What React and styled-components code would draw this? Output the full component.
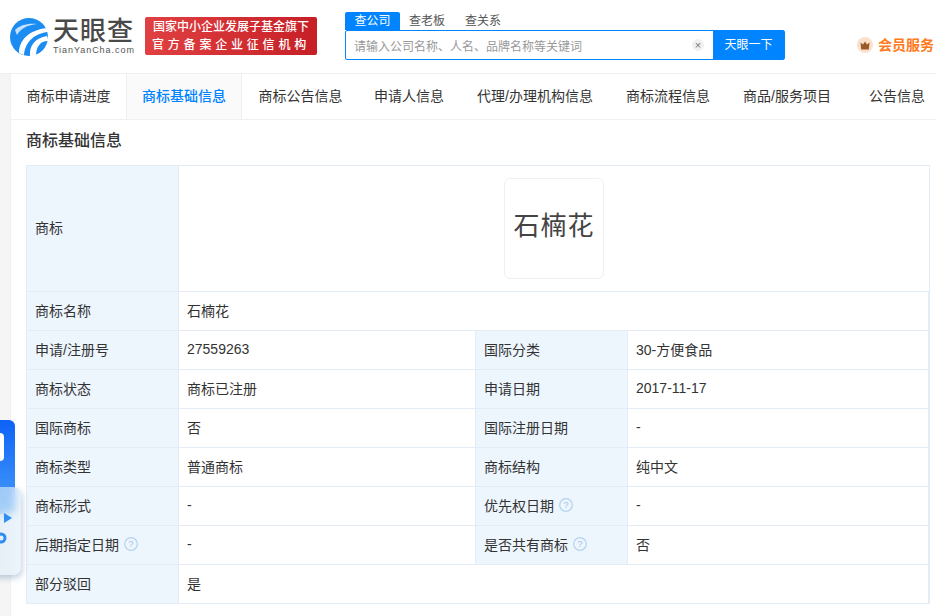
import styled, { createGlobalStyle } from 'styled-components';

const tabs = [
  { label: '商标申请进度', width: 115 },
  { label: '商标基础信息', width: 116, active: true },
  { label: '商标公告信息', width: 117 },
  { label: '申请人信息', width: 100 },
  { label: '代理/办理机构信息', width: 152 },
  { label: '商标流程信息', width: 114 },
  { label: '商品/服务项目', width: 124 },
  { label: '公告信息', width: 96 },
];

const Hint = () => (
  <HintIcon viewBox="0 0 14 14">
    <circle cx="7" cy="7" r="6.3" fill="none" stroke="#b5d3ee" strokeWidth="1.2" />
    <text x="7" y="10.4" textAnchor="middle" fontSize="9.5" fill="#9fc3e6" fontFamily="Liberation Sans, sans-serif">?</text>
  </HintIcon>
);

const rows = [
  [['商标名称'], ['石楠花', 3]],
  [['申请/注册号'], ['27559263'], ['国际分类'], ['30-方便食品']],
  [['商标状态'], ['商标已注册'], ['申请日期'], ['2017-11-17']],
  [['国际商标'], ['否'], ['国际注册日期'], ['-']],
  [['商标类型'], ['普通商标'], ['商标结构'], ['纯中文']],
  [['商标形式'], ['-'], ['优先权日期', 1, true], ['-']],
  [['后期指定日期', 1, true], ['-'], ['是否共有商标', 1, true], ['否']],
  [['部分驳回'], ['是', 3]],
];

const App = () => (
  <>
    <GlobalStyle />
    <Header>
      <Brand>
        <svg width="38" height="38" viewBox="0 0 38 38">
          <circle cx="19" cy="19" r="19" fill="#1b8cf2" />
          <path d="M9 35C9 22 19 12 37 10L38 14C25 15 15 24 14 37Z" fill="#fff" />
          <path d="M20 38C19 28 25 20 37 18C38 20 38 21 38 23C30 23 26 29 26 38Z" fill="#fff" />
          <path d="M5 12C10 7 18 5 27 6C18 7 11 10 7 17Z" fill="#fff" opacity="0.75" />
        </svg>
        <BrandText>
          <BrandName>天眼查</BrandName>
          <BrandDomain>TianYanCha.com</BrandDomain>
        </BrandText>
      </Brand>
      <Banner>
        <BannerLine>国家中小企业发展子基金旗下</BannerLine>
        <BannerLine $spaced>官方备案企业征信机构</BannerLine>
      </Banner>
      <SearchArea>
        <SearchTabs>
          <SearchTab $active>查公司</SearchTab>
          <SearchTab>查老板</SearchTab>
          <SearchTab>查关系</SearchTab>
        </SearchTabs>
        <SearchBox>
          <SearchHint>请输入公司名称、人名、品牌名称等关键词</SearchHint>
          <ClearButton>×</ClearButton>
          <SearchButton>天眼一下</SearchButton>
        </SearchBox>
      </SearchArea>
      <Member>
        <MemberIcon>
          <svg width="10" height="9" viewBox="0 0 10 9">
            <path d="M0.5 1.5L3 3.5L5 0.5L7 3.5L9.5 1.5L8.8 8.5H1.2Z" fill="#9a5a2a" />
          </svg>
        </MemberIcon>
        会员服务
      </Member>
    </Header>
    <Body>
      <Main>
        <TabBar>
          {tabs.map((t) => (
            <Tab key={t.label} $width={t.width} $active={t.active}>{t.label}</Tab>
          ))}
        </TabBar>
        <Section>
          <Title>商标基础信息</Title>
          <Table>
            <Label>商标</Label>
            <LogoCell>
              <LogoCard>石楠花</LogoCard>
            </LogoCell>
            {rows.map((row) =>
              row.map(([text, span, hint], i) =>
                i % 2 === 0 ? (
                  <Label key={row[0][0] + i}>
                    {text}
                    {hint && <Hint />}
                  </Label>
                ) : (
                  <Value key={row[0][0] + i} $span={span}>{text}</Value>
                )
              )
            )}
          </Table>
        </Section>
      </Main>
    </Body>
    <FloatBack>
      <FloatNotch />
    </FloatBack>
    <FloatCard>
      <svg width="21" height="36" viewBox="0 0 21 36">
        <path d="M4 0L12 5L4 10Z" fill="#2d8df5" />
        <circle cx="1" cy="25" r="4" fill="none" stroke="#2d8df5" strokeWidth="3" />
      </svg>
    </FloatCard>
  </>
);

const GlobalStyle = createGlobalStyle`
  html, body {
    margin: 0;
    padding: 0;
    background: #f5f5f5;
    overflow: hidden;
  }
  body {
    font-family: "Liberation Sans", "Noto Sans CJK SC", sans-serif;
    color: #333;
  }
`;

const Header = styled.header`
  height: 73px;
  background: #fff;
  display: flex;
  align-items: flex-start;
  border-bottom: 1px solid #f0f0f0;
  box-sizing: content-box;
`;

const Brand = styled.div`
  display: flex;
  align-items: center;
  gap: 5px;
  margin: 17px 0 0 10px;
  width: 135px;
  flex: none;
`;

const BrandText = styled.div`
  display: flex;
  flex-direction: column;
`;

const BrandName = styled.div`
  font-size: 26px;
  line-height: 28px;
  font-weight: 500;
  color: #4a4a4a;
  letter-spacing: 1px;
`;

const BrandDomain = styled.div`
  font-size: 9px;
  line-height: 11px;
  color: #555;
  letter-spacing: 0.95px;
  white-space: nowrap;
`;

const Banner = styled.div`
  width: 172px;
  height: 38px;
  margin: 17px 0 0 0;
  flex: none;
  border-radius: 2px;
  background: linear-gradient(90deg, #e04042, #c62026);
  color: #fff;
  font-size: 12px;
  display: flex;
  flex-direction: column;
  justify-content: center;
  align-items: center;
  font-weight: 500;
`;

const BannerLine = styled.div`
  line-height: 18px;
  letter-spacing: ${(p) => (p.$spaced ? '3.8px' : '0')};
  white-space: nowrap;
`;

const SearchArea = styled.div`
  width: 440px;
  margin: 12px 0 0 28px;
  flex: none;
`;

const SearchTabs = styled.div`
  display: flex;
  height: 18px;
`;

const SearchTab = styled.div`
  width: ${(p) => (p.$active ? '55px' : 'auto')};
  padding: ${(p) => (p.$active ? '0' : '0 9px')};
  margin-right: ${(p) => (p.$active ? '0' : '2px')};
  text-align: center;
  font-size: 12px;
  line-height: 18px;
  color: ${(p) => (p.$active ? '#fff' : '#555')};
  background: ${(p) => (p.$active ? '#0084ff' : 'transparent')};
  border-radius: 2px 2px 0 0;
`;

const SearchBox = styled.div`
  height: 28px;
  display: flex;
  align-items: center;
  border: 1px solid #0084ff;
  border-radius: 2px;
  box-sizing: content-box;
`;

const SearchHint = styled.div`
  flex: 1;
  padding-left: 8px;
  font-size: 12px;
  color: #999;
`;

const ClearButton = styled.div`
  width: 12px;
  height: 12px;
  margin-right: 9px;
  border-radius: 50%;
  background: #f0f0f0;
  color: #777;
  font-size: 11px;
  line-height: 12px;
  text-align: center;
`;

const SearchButton = styled.div`
  width: 71px;
  height: 28px;
  background: #0084ff;
  color: #fff;
  font-size: 12px;
  line-height: 28px;
  text-align: center;
`;

const Member = styled.div`
  margin: 37px 2px 0 auto;
  display: flex;
  align-items: center;
  gap: 5px;
  font-size: 14px;
  line-height: 16px;
  font-weight: 700;
  color: #ff7a1a;
  white-space: nowrap;
`;

const MemberIcon = styled.span`
  width: 16px;
  height: 16px;
  border-radius: 50%;
  background: #fbe0cc;
  display: flex;
  align-items: center;
  justify-content: center;
`;

const Body = styled.div`
  padding-left: 10px;
`;

const Main = styled.main`
  background: #fff;
  border-left: 1px solid #f0f0f0;
  height: 542px;
`;

const TabBar = styled.nav`
  display: flex;
  height: 46px;
  border-bottom: 1px solid #f0f0f0;
  box-sizing: border-box;
`;

const Tab = styled.div`
  width: ${(p) => p.$width}px;
  flex: none;
  text-align: center;
  font-size: 14px;
  line-height: 45px;
  white-space: nowrap;
  color: ${(p) => (p.$active ? '#0084ff' : '#333')};
  font-weight: ${(p) => (p.$active ? 500 : 400)};
  background: ${(p) => (p.$active ? '#fafafa' : '#fff')};
  box-shadow: ${(p) => (p.$active ? 'inset 1px 0 #f0f0f0, inset -1px 0 #f0f0f0' : 'none')};
`;

const Section = styled.section`
  padding: 0 6px 0 15px;
`;

const Title = styled.h2`
  margin: 0;
  height: 45px;
  font-size: 16px;
  line-height: 41px;
  font-weight: 500;
  color: #333;
`;

const Table = styled.div`
  display: grid;
  grid-template-columns: 152px 297px 152px 1fr;
  grid-auto-rows: 39px;
  grid-template-rows: 126px;
  border: solid #e4edf6;
  border-width: 1px 1px 0 1px;
`;

const Label = styled.div`
  display: flex;
  align-items: center;
  gap: 5px;
  padding: 0 0 3px 8px;
  font-size: 14px;
  background: #edf5fd;
  color: #333;
  border-bottom: 1px solid #e4edf6;
  border-right: 1px solid #e4edf6;
`;

const Value = styled.div`
  grid-column: span ${(p) => p.$span || 1};
  display: flex;
  align-items: center;
  padding: 0 0 3px 8px;
  font-size: 14px;
  background: #fff;
  color: #333;
  border-bottom: 1px solid #e4edf6;
  border-right: 1px solid #e4edf6;
`;

const LogoCell = styled.div`
  grid-column: span 3;
  display: flex;
  align-items: center;
  justify-content: center;
  border-bottom: 1px solid #e4edf6;
`;

const LogoCard = styled.div`
  width: 98px;
  height: 89px;
  padding-bottom: 10px;
  box-sizing: content-box;
  border: 1px solid #f0f0f0;
  border-radius: 6px;
  display: flex;
  align-items: center;
  justify-content: center;
  font-family: "Noto Sans CJK SC", sans-serif;
  font-weight: 400;
  font-size: 26px;
  letter-spacing: 1px;
  color: #444;
`;

const HintIcon = styled.svg`
  width: 14px;
  height: 14px;
`;

const FloatBack = styled.div`
  position: absolute;
  left: -40px;
  top: 420px;
  width: 55px;
  height: 94px;
  border-radius: 6px;
  background: linear-gradient(180deg, #0d62f8, #4a9ff8);
  overflow: hidden;
`;

const FloatNotch = styled.div`
  position: absolute;
  right: 11px;
  top: 13px;
  width: 20px;
  height: 28px;
  background: #fff;
  border-radius: 4px;
`;

const FloatCard = styled.div`
  position: absolute;
  left: -30px;
  top: 487px;
  width: 51px;
  height: 88px;
  padding: 26px 0 0 30px;
  box-sizing: border-box;
  border-radius: 8px;
  background: rgba(222, 238, 247, 0.62);
  backdrop-filter: blur(4px);
  box-shadow: 1px 3px 6px rgba(90, 130, 170, 0.4);
`;

export default App;
